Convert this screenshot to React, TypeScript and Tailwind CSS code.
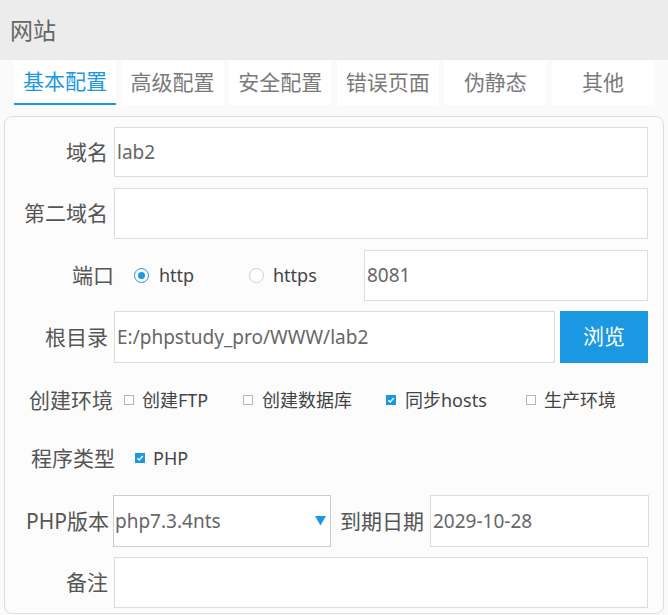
import React from 'react';

const font = { fontFamily: '"Noto Sans", "Noto Sans CJK SC", sans-serif' };

const tabs = ['基本配置', '高级配置', '安全配置', '错误页面', '伪静态', '其他'];

const Checkbox: React.FC<{ checked?: boolean }> = ({ checked }) =>
  checked ? (
    <span className="flex h-[10px] w-[10px] shrink-0 items-center justify-center bg-[#1a98e2]">
      <svg width="8" height="8" viewBox="0 0 8 8">
        <path d="M1.3 4.2 L3.2 6 L6.8 2" stroke="#fff" strokeWidth="1.4" fill="none" />
      </svg>
    </span>
  ) : (
    <span className="h-[10px] w-[10px] shrink-0 border border-[#b5b5b5] bg-white" />
  );

const Radio: React.FC<{ checked?: boolean }> = ({ checked }) => (
  <span
    className={
      checked
        ? 'flex h-[15px] w-[15px] shrink-0 items-center justify-center rounded-full border border-[#1a98e2] bg-white'
        : 'h-[15px] w-[15px] shrink-0 rounded-full border border-[#d0d0d0] bg-white'
    }
  >
    {checked && <span className="h-[7px] w-[7px] rounded-full bg-[#1a98e2]" />}
  </span>
);

const Label: React.FC<{ w: string; children: React.ReactNode }> = ({ w, children }) => (
  <div className={`${w} shrink-0 text-right text-[21px] leading-none text-[#555]`}>{children}</div>
);

const Field: React.FC<{ className: string; value?: string }> = ({ className, value }) => (
  <div className={`${className} flex h-full items-center border border-[#ddd] bg-white pl-[2px] text-[19px] text-[#666]`}>
    {value}
  </div>
);

const App: React.FC = () => {
  return (
    <div className="h-[615px] w-[668px] overflow-hidden bg-[#fafafa]" style={font}>
      <div className="flex h-[60px] items-center bg-[#ececec] pl-[10px] text-[23px] text-[#666]">网站</div>

      <div className="flex h-[45px] gap-[5.6px] px-[14px] pt-[1px]">
        {tabs.map((t, i) => (
          <div
            key={t}
            className={
              i === 0
                ? 'flex flex-1 items-center justify-center border-b-2 border-[#1a98e2] bg-white text-[21px] text-[#1a98e2]'
                : 'flex flex-1 items-center justify-center bg-white text-[21px] text-[#7a7a7a]'
            }
          >
            {t}
          </div>
        ))}
      </div>

      <div className="ml-[4px] mt-[11px] h-[498px] w-[660px] rounded-[8px] border border-[#ddd] bg-[#fcfcfc]">
        <div className="mt-[10px] flex h-[50px] items-center">
          <Label w="w-[103px]">域名</Label>
          <Field className="ml-[6px] w-[534px]" value="lab2" />
        </div>

        <div className="mt-[11px] flex h-[51px] items-center">
          <Label w="w-[103px]">第二域名</Label>
          <Field className="ml-[6px] w-[534px]" />
        </div>

        <div className="mt-[11px] flex h-[51px] items-center">
          <Label w="w-[109px]">端口</Label>
          <div className="ml-[20px] flex w-[115px] items-center gap-[10px] text-[18px] text-[#444]">
            <Radio checked />
            <span>http</span>
          </div>
          <div className="flex w-[115px] items-center gap-[9px] text-[18px] text-[#444]">
            <Radio />
            <span>https</span>
          </div>
          <Field className="w-[284px]" value="8081" />
        </div>

        <div className="mt-[10px] flex h-[52px] items-center">
          <Label w="w-[103px]">根目录</Label>
          <Field className="ml-[6px] w-[441px]" value="E:/phpstudy_pro/WWW/lab2" />
          <div className="ml-[5px] flex h-full w-[88px] items-center justify-center bg-[#1a98e2] text-[21px] text-white">
            浏览
          </div>
        </div>

        <div className="mt-[11px] flex h-[52px] items-center text-[18px] text-[#444]">
          <Label w="w-[108px]">创建环境</Label>
          <div className="ml-[11px] flex w-[119px] items-center gap-[8px]">
            <Checkbox />
            <span>创建FTP</span>
          </div>
          <div className="flex w-[143px] items-center gap-[9px]">
            <Checkbox />
            <span>创建数据库</span>
          </div>
          <div className="flex w-[140px] items-center gap-[9px]">
            <Checkbox checked />
            <span>同步hosts</span>
          </div>
          <div className="flex items-center gap-[8px]">
            <Checkbox />
            <span>生产环境</span>
          </div>
        </div>

        <div className="mt-[6px] flex h-[52px] items-center text-[18px] text-[#444]">
          <Label w="w-[110px]">程序类型</Label>
          <div className="ml-[20px] flex items-center gap-[8px]">
            <Checkbox checked />
            <span>PHP</span>
          </div>
        </div>

        <div className="mt-[11px] flex h-[52px] items-center">
          <Label w="w-[104px]">PHP版本</Label>
          <div className="ml-[4px] flex h-full w-[218px] items-center justify-between border border-[#ccc] bg-white pl-[1px] pr-[4px] text-[19px] text-[#666]">
            <span>php7.3.4nts</span>
            <svg width="11" height="10" viewBox="0 0 11 10">
              <polygon points="0,0 11,0 5.5,9.5" fill="#1a98e2" />
            </svg>
          </div>
          <div className="ml-[9px] shrink-0 text-[21px] leading-none text-[#555]">到期日期</div>
          <Field className="ml-[6px] w-[219px]" value="2029-10-28" />
        </div>

        <div className="mt-[10px] flex h-[51px] items-center">
          <Label w="w-[103px]">备注</Label>
          <Field className="ml-[6px] w-[534px]" />
        </div>
      </div>
    </div>
  );
};

export default App;
